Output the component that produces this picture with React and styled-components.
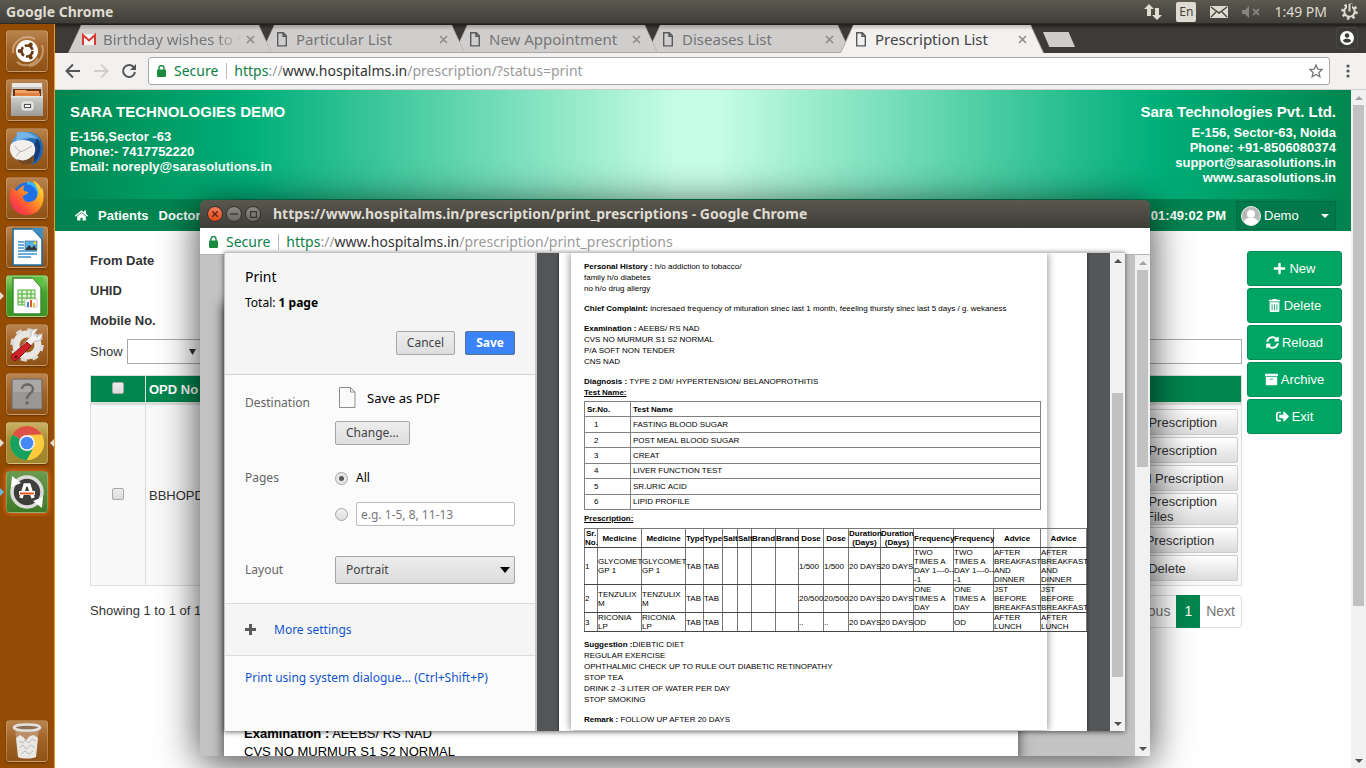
import React from "react";
import styled, { createGlobalStyle, css } from "styled-components";
import { FaHome, FaPlus, FaTrashAlt, FaSyncAlt, FaArchive, FaSignOutAlt } from "react-icons/fa";

const ui = `"Noto Sans", "Open Sans", sans-serif`;
const web = `"Liberation Sans", Arial, sans-serif`;

const GlobalStyle = createGlobalStyle`
  *, *::before, *::after { box-sizing: border-box; }
  body { margin: 0; overflow: hidden; }
  button, input, select { font: inherit; color: inherit; margin: 0; }
  a { color: inherit; text-decoration: none; }
  svg { display: block; flex: none; }
`;

/* ---------- Desktop shell ---------- */

const Desktop = styled.div`
  position: relative;
  display: flex;
  flex-direction: column;
  height: 100vh;
  overflow: hidden;
  font-family: ${ui};
  background: #fff;
`;

const TopPanel = styled.header`
  flex: none;
  display: flex;
  align-items: center;
  justify-content: space-between;
  height: 24px;
  padding: 0 8px 0 6px;
  color: #dfdbd2;
  font-size: 14px;
  line-height: 20px;
  background: linear-gradient(#5c594f, #3f3e39);
  border-bottom: 1px solid #2b2a27;
`;

const PanelTitle = styled.strong`
  font-weight: 700;
`;

const Tray = styled.div`
  display: flex;
  align-items: center;
  gap: 14px;
`;

const Lang = styled.span`
  display: grid;
  place-items: center;
  width: 20px;
  height: 20px;
  border-radius: 2px;
  background: #dfdbd2;
  color: #45443e;
  font-size: 12px;
`;

const Workspace = styled.div`
  flex: 1;
  display: flex;
  min-height: 0;
`;

const Launcher = styled.aside`
  flex: none;
  display: flex;
  flex-direction: column;
  gap: 7px;
  width: 55px;
  padding: 6px 6px;
  background: #944c05;
  border-right: 1px solid #f29a2e;
`;

const LauncherTile = styled.button`
  position: relative;
  flex: none;
  width: 42px;
  height: 42px;
  padding: 0;
  border: 1px solid rgba(255, 220, 180, 0.28);
  border-radius: 4px;
  background: ${(p) => p.$tint || "linear-gradient(#b98450, #a26428 45%, #8f5216)"};
  box-shadow: ${(p) => (p.$glow ? "0 0 4px 1px #e8651c" : "0 1px 2px rgba(0, 0, 0, 0.35)")};
  ${(p) => p.$last && css`margin-top: auto;`}
  svg { width: 40px; height: 40px; }
`;

const Pip = styled.i`
  position: absolute;
  left: -7px;
  top: 16px;
  border: 4px solid transparent;
  border-left-color: ${(p) => p.$color || "#e5ddd2"};
`;

const PipRight = styled(Pip)`
  left: auto;
  right: -7px;
  border-left-color: transparent;
  border-right-color: #e5ddd2;
`;

/* ---------- Browser window ---------- */

const Browser = styled.main`
  flex: 1;
  display: flex;
  flex-direction: column;
  min-width: 0;
`;

const TabStrip = styled.nav`
  flex: none;
  display: flex;
  align-items: flex-end;
  height: 29px;
  padding: 0 8px 0 13px;
  background: linear-gradient(#1f1e1c, #3c3b37 5px);
`;

const Tab = styled.a`
  position: relative;
  isolation: isolate;
  z-index: ${(p) => p.$z};
  flex: 0 1 204px;
  display: flex;
  align-items: center;
  min-width: 0;
  height: 28px;
  margin-right: -11px;
  padding: 0 17px 0 14px;
  color: ${(p) => (p.$active ? "#444" : "#757575")};
  font-size: 15px;
  line-height: 20px;
  &::before, &::after {
    content: "";
    position: absolute;
    inset: 0;
    z-index: -2;
    background: #aaa9a7;
    clip-path: polygon(13px 0, calc(100% - 13px) 0, 100% 100%, 0 100%);
  }
  &::after {
    z-index: -1;
    inset: 0 1px ${(p) => (p.$active ? "0" : "1px")} 1px;
    background: ${(p) => (p.$active ? "linear-gradient(#bcbbba, #f2f1f0 5px)" : "linear-gradient(#9f9e9c, #d0cecd 5px)")};
  }
`;

const TabTitle = styled.span`
  flex: 1;
  margin: 0 5px 0 7px;
  overflow: hidden;
  white-space: nowrap;
  ${(p) => p.$fade && css`mask-image: linear-gradient(90deg, #000 82%, transparent);`}
`;

const NewTab = styled.button`
  width: 32px;
  height: 15px;
  margin: 0 0 6px 10px;
  padding: 0;
  border: 0;
  background: #cfcdcb;
  clip-path: polygon(0 0, 80% 0, 100% 100%, 20% 100%);
`;

const ProfileButton = styled.button`
  margin: 0 0 4px auto;
  width: 22px;
  height: 22px;
  padding: 3px;
  border: 1px solid #494844;
  border-radius: 3px;
  background: none;
`;

const Toolbar = styled.div`
  flex: none;
  display: flex;
  align-items: center;
  gap: 10px;
  height: 37px;
  padding: 0 16px 0 9px;
  background: #f2f1f0;
  border-bottom: 1px solid #cfcecc;
`;

const IconButton = styled.button`
  padding: 0;
  border: 0;
  background: none;
`;

const Omnibox = styled.div`
  flex: 1;
  display: flex;
  align-items: center;
  height: 28px;
  padding: 0 6px 0 8px;
  border: 1px solid #a9a8a7;
  border-radius: 3px;
  background: #fff;
`;

const Address = styled.div`
  flex: 1;
  display: flex;
  align-items: center;
  color: #9a9a9a;
  font-size: 14px;
  line-height: 20px;
  white-space: nowrap;
  em { font-style: normal; color: #0b8043; }
  b { font-weight: 400; color: #333; }
`;

const Secure = styled.span`
  margin-left: 8px;
  padding-right: 8px;
  margin-right: 7px;
  line-height: 16px;
  color: #0b8043;
  border-right: 1px solid #bbb;
`;

const View = styled.div`
  flex: 1;
  display: flex;
  min-height: 0;
`;

const Page = styled.div`
  flex: 1;
  min-width: 0;
  overflow: hidden;
  background: #fff;
  color: #333;
  font: 13px/15px ${web};
`;

/* ---------- Scroll bar ---------- */

const Track = styled.div`
  flex: none;
  display: flex;
  flex-direction: column;
  width: 15px;
  padding: 0 2px;
  background: #f1f1f1;
`;

const Arrow = styled.i`
  flex: none;
  height: 15px;
  display: grid;
  place-items: center;
  &::before {
    content: "";
    border: 4px solid transparent;
    border-top-width: ${(p) => (p.$up ? "0" : "4px")};
    border-bottom-width: ${(p) => (p.$up ? "4px" : "0")};
    border-${(p) => (p.$up ? "bottom" : "top")}-color: ${(p) => (p.$dim ? "#a3a3a3" : "#505050")};
  }
`;

const Part = styled.div`
  flex: ${(p) => p.$grow} 1 0;
  background: ${(p) => (p.$thumb ? "#c1c1c1" : "none")};
`;

const Scroll = ({ before = 0, size, after }) => (
  <Track aria-hidden="true">
    <Arrow $up $dim={before === 0} />
    {before > 0 && <Part $grow={before} />}
    <Part $grow={size} $thumb />
    <Part $grow={after} />
    <Arrow />
  </Track>
);

/* ---------- Hospital site ---------- */

const Banner = styled.header`
  display: flex;
  justify-content: space-between;
  height: 109px;
  padding: 14px 15px 0;
  color: #fff;
  font-weight: 700;
  background: linear-gradient(90deg, #00864f, #00af79 15%, #c6fde6 48%, #c6fde6 51%, #00af79 85%, #00864f);
`;

const Company = styled.address`
  font-style: normal;
  text-align: ${(p) => (p.$right ? "right" : "left")};
  h1, h2 {
    margin: 0 0 ${(p) => (p.$right ? "5px" : "9px")};
    font-size: 15px;
    line-height: 16px;
  }
  span { display: block; }
`;

const SiteNav = styled.nav`
  display: flex;
  align-items: center;
  gap: 10px;
  height: 32px;
  padding: 1px 15px 0 20px;
  color: #fff;
  font-weight: 700;
  background: #00844f;
  time { margin-left: auto; }
`;

const UserMenu = styled.button`
  display: flex;
  align-items: center;
  gap: 3px;
  width: 100px;
  height: 29px;
  padding: 0 6px 0 4px;
  border: 1px solid #006b41;
  background: #007849;
  font-weight: 400;
  text-align: left;
  svg:last-child { margin-left: auto; }
`;

const Content = styled.div`
  display: flex;
  gap: 5px;
  padding: 15px 9px 0 35px;
`;

const Listing = styled.section`
  flex: 1;
  min-width: 0;
`;

const FilterLabel = styled.div`
  line-height: 30px;
  font-weight: 700;
`;

const Controls = styled.div`
  display: flex;
  justify-content: space-between;
  align-items: center;
  margin: 3px 0 11px;
`;

const LengthLabel = styled.label`
  display: flex;
  align-items: center;
  gap: 4px;
`;

const SelectWrap = styled.span`
  position: relative;
  display: block;
  svg { position: absolute; right: ${(p) => p.$right}px; top: ${(p) => p.$top}px; pointer-events: none; }
`;

const LengthSelect = styled.select`
  appearance: none;
  display: block;
  width: 76px;
  height: 25px;
  border: 1px solid #a9a9a9;
  border-radius: 0;
  background: #fff;
`;

const SearchInput = styled.input`
  width: 160px;
  height: 25px;
  border: 1px solid #a9a9a9;
  background: #fff;
`;

const DataTable = styled.table`
  width: 100%;
  border-collapse: collapse;
  table-layout: fixed;
  th, td { border: 1px solid #ddd; padding: 4px 3px; text-align: left; }
  th { height: 28px; color: #fff; background: #00864f; border-bottom: 3px solid #ddd; }
  td { background: #f9f9f9; }
  th:first-child, td:first-child { text-align: center; }
`;

const Check = styled.input`
  appearance: none;
  width: 12px;
  height: 12px;
  border: 1px solid #a8a8a8;
  border-radius: 2px;
  background: linear-gradient(#ededed, #dcdcdc);
`;

const Actions = styled.div`
  display: flex;
  flex-direction: column;
  gap: 2px;
`;

const ActionButton = styled.button`
  min-height: 26px;
  padding: 0;
  border: 1px solid #ccc;
  border-radius: 2px;
  background: linear-gradient(#fff, #dcdcdc);
  line-height: 15px;
`;

const Footer = styled.div`
  display: flex;
  justify-content: space-between;
  align-items: flex-start;
  margin-top: 9px;
  line-height: 31px;
`;

const Pager = styled.nav`
  display: flex;
  height: 33px;
  border: 1px solid #ddd;
  border-radius: 4px;
  color: #777;
  font-size: 14px;
`;

const PageLink = styled.a`
  padding: 0 6px;
  ${(p) => p.$current && css`color: #fff; background: #00864f; margin: -1px 0;  padding: 1px 8px;`}
`;

const SideButtons = styled.aside`
  flex: none;
  display: flex;
  flex-direction: column;
  gap: 2px;
  width: 95px;
  padding-top: 5px;
`;

const GreenButton = styled.button`
  display: flex;
  align-items: center;
  justify-content: center;
  gap: 3px;
  height: 35px;
  padding: 0;
  border: 1px solid #008d54;
  border-radius: 3px;
  background: #00a564;
  color: #fff;
`;

/* ---------- Popup window ---------- */

const Popup = styled.section`
  position: absolute;
  top: 200px;
  left: 200px;
  right: 216px;
  bottom: 12px;
  display: flex;
  flex-direction: column;
  border-radius: 6px 6px 0 0;
  box-shadow: 0 6px 40px rgba(0, 0, 0, 0.75);
`;

const PopupTitle = styled.header`
  flex: none;
  display: flex;
  align-items: center;
  gap: 3px;
  height: 28px;
  padding: 0 7px;
  border-radius: 6px 6px 0 0;
  background: linear-gradient(#5a574e, #3e3d38);
  color: #dfdbd2;
  font-size: 14px;
  line-height: 20px;
  h2 { margin: 0 0 0 9px; font: inherit; font-weight: 700; }
`;

const WindowButton = styled.button`
  display: grid;
  place-items: center;
  width: 16px;
  height: 16px;
  padding: 0;
  border: 1px solid #34332f;
  border-radius: 50%;
  background: ${(p) => (p.$close ? "linear-gradient(#f47b57, #df4a16)" : "linear-gradient(#8a8880, #6b6962)")};
`;

const PopupBar = styled.div`
  flex: none;
  display: flex;
  height: 27px;
  padding: 2px 9px 0;
  background: #fff;
  border-bottom: 1px solid #b5b5b5;
`;

const PopupView = styled.div`
  flex: 1;
  display: flex;
  min-height: 0;
  background: #c3c3c3;
`;

const PopupPage = styled.div`
  flex: 1;
  display: flex;
  padding: 48px 117px 0 24px;
  overflow: hidden;
`;

const PopupDocument = styled.article`
  flex: 1;
  display: flex;
  flex-direction: column;
  justify-content: flex-end;
  height: 458px;
  padding: 0 20px;
  background: #fff;
  box-shadow: 0 0 12px rgba(0, 0, 0, 0.7);
  color: #000;
  font: 13px/18px ${web};
`;

/* ---------- Print dialog ---------- */

const Dialog = styled.div`
  position: absolute;
  top: 52px;
  left: 24px;
  right: 25px;
  bottom: 25px;
  display: flex;
  border: 1px solid #c4c4c4;
  border-width: 1px 0 0 1px;
  box-shadow: 0 1px 5px rgba(0, 0, 0, 0.6);
  overflow: hidden;
  background: #fbfbfb;
`;

const Settings = styled.form`
  flex: none;
  width: 312px;
  border-right: 2px solid #c8c8c8;
  color: #646464;
  font-size: 12px;
  line-height: 16px;
`;

const SettingsHead = styled.div`
  height: 122px;
  padding: 15px 20px 0;
  background: #f5f5f5;
  border-bottom: 1px solid #d2d2d2;
  color: #000;
  h3 { margin: 0 0 9px; font-size: 14px; font-weight: 400; line-height: 18px; }
`;

const ButtonRow = styled.div`
  display: flex;
  justify-content: flex-end;
  gap: 10px;
  margin-top: 20px;
`;

const DialogButton = styled.button`
  height: 24px;
  padding: 0 10px;
  border: 1px solid #a6a6a6;
  border-radius: 2px;
  background: linear-gradient(#ededed, #dedede);
  color: #444;
  line-height: 16px;
  ${(p) => p.$primary && css`
    border-color: #5b6f94;
    background: #3b84f8;
    color: #fff;
    font-weight: 700;
  `}
`;

const SettingsBody = styled.div`
  display: flex;
  flex-direction: column;
  gap: 25px;
  height: 229px;
  padding: 12px 20px 0;
  border-bottom: 1px solid #dcdcdc;
`;

const Setting = styled.div`
  display: grid;
  grid-template-columns: 90px minmax(0, 1fr);
  padding-top: ${(p) => p.$space || 0}px;
  > :first-child { padding-top: ${(p) => p.$drop || 0}px; }
`;

const Options = styled.div`
  display: flex;
  flex-direction: column;
  align-items: ${(p) => (p.$fill ? "stretch" : "flex-start")};
  gap: ${(p) => p.$gap || 0}px;
`;

const Target = styled.span`
  display: flex;
  align-items: center;
  gap: 11px;
  height: 22px;
  padding-left: 4px;
  color: #000;
  font-size: 13px;
`;

const RadioRow = styled.div`
  display: flex;
  align-items: center;
  gap: 8px;
  color: #000;
  label { flex: 1; }
`;

const Radio = styled.input`
  appearance: none;
  flex: none;
  width: 13px;
  height: 13px;
  border: 1px solid #a4a4a4;
  border-radius: 50%;
  background: linear-gradient(#f0f0f0, #dedede);
  &:checked { background: radial-gradient(circle, #555 2px, #e6e6e6 3px); }
`;

const RangeInput = styled.input`
  flex: 1;
  width: 100%;
  min-width: 0;
  height: 24px;
  padding: 0 4px;
  border: 1px solid #bdbdbd;
  border-radius: 2px;
  background: #fff;
  &::placeholder { color: #777; }
`;

const LayoutSelect = styled.select`
  appearance: none;
  display: block;
  width: 100%;
  height: 28px;
  padding: 0 10px;
  border: 1px solid #a6a6a6;
  border-radius: 2px;
  background: linear-gradient(#ededed, #dcdcdc);
  color: #444;
`;

const MoreSettings = styled.div`
  display: flex;
  align-items: center;
  gap: 18px;
  height: 52px;
  padding: 0 20px;
  border-bottom: 1px solid #dcdcdc;
  background: #f5f5f5;
`;

const BlueLink = styled.a`
  color: #1155cc;
`;

const SystemPrint = styled.div`
  padding: 14px 20px;
`;

const Preview = styled.div`
  flex: 1;
  display: flex;
  min-width: 0;
  background: #525659;
`;

const Sheet = styled.div`
  flex: 1;
  min-width: 0;
  margin: 0 23px 0 22px;
  background: #fff;
  box-shadow: 0 0 3px rgba(0, 0, 0, 0.6);
  overflow: hidden;
`;

const Prescription = styled.article`
  height: calc(100% - 1px);
  margin: 0 40px 0 12px;
  padding: 8px 6px 0 13px;
  box-shadow: 0 0 8px rgba(0, 0, 0, 0.5);
  color: #000;
  font: 8px/11px ${web};
  h4 { margin: 0; font-size: 8px; line-height: 11px; text-decoration: underline; }
  p { margin: 0 0 9px; }
`;

const Line = styled.span`
  display: block;
`;

const TestTable = styled.table`
  width: 100%;
  height: 109px;
  margin: 3px 0;
  border-collapse: collapse;
  th, td { height: 15px; border: 1px solid #808080; padding: 0 2px; text-align: left; line-height: 11px; }
  th:first-child { width: 46px; }
  td:first-child { padding-left: 9px; }
`;

const MedicineTable = styled.table`
  width: 503px;
  margin: 4px 0 7px;
  table-layout: fixed;
  border-collapse: collapse;
  border: 1px solid #222;
  line-height: 9px;
  th, td { border: 1px solid #777; border-bottom-color: #444; padding: 0; overflow: visible; }
  th { text-align: center; }
  td { text-align: left; white-space: pre; }
`;

/* ---------- Drawings ---------- */

const Lock = () => (
  <svg width="9" height="12" viewBox="0 0 9 12"><rect y="4.5" width="9" height="7.5" rx="1" fill="#1a8a3f" /><path d="M2 5V3a2.5 2.5 0 0 1 5 0v2" fill="none" stroke="#1a8a3f" strokeWidth="1.4" /></svg>
);
const FileIcon = () => (
  <svg width="14" height="15" viewBox="0 0 14 15"><path d="M2.7.7h5.6l3 3.2v10H2.7z M8 .7v3.6h3.4" fill="none" stroke="#5a5a5a" strokeWidth="1.4" /></svg>
);
const GmailIcon = () => (
  <svg width="14" height="15" viewBox="0 0 14 15"><path d="M0 2h14v11H0z" fill="#f4f4f4" /><path d="M1 13V3l6 5.5L13 3v10" fill="none" stroke="#d93a30" strokeWidth="2" /></svg>
);
const CloseX = () => (
  <svg width="9" height="9" viewBox="0 0 9 9"><path d="M1 1l7 7M8 1l-7 7" stroke="#8c8b8a" strokeWidth="1.5" /></svg>
);
const Caret = ({ color = "#000", w = 9, h = 5 }) => (
  <svg width={w} height={h} viewBox="0 0 10 6" preserveAspectRatio="none"><path d="M0 0h10L5 6z" fill={color} /></svg>
);

const UbuntuArt = () => (
  <svg viewBox="0 0 40 40">
    <g fill="none" stroke="#e6c9ac" strokeWidth="2" opacity=".55"><path d="M6 22C5 9 18 3 28 8" /><path d="M35 14c3 9-2 20-13 21" /><path d="M10 31c7 6 18 3 21-4" /></g>
    <circle cx="20" cy="20" r="11" fill="#fff" />
    <circle cx="20" cy="20" r="5.5" fill="none" stroke="#6b3a12" strokeWidth="2.6" strokeDasharray="9.5 2" />
    <g fill="#6b3a12"><circle cx="12.6" cy="20" r="2" /><circle cx="23.7" cy="13.6" r="2" /><circle cx="23.7" cy="26.4" r="2" /></g>
  </svg>
);
const FilesArt = () => (
  <svg viewBox="0 0 40 40">
    <defs><linearGradient id="cab" x1="0" y1="0" x2="0" y2="1"><stop offset="0" stopColor="#cfcfce" /><stop offset="1" stopColor="#9b9b9a" /></linearGradient></defs>
    <path d="M5 3h30l1 13H4z" fill="#c4c4c3" /><path d="M5 3h30v4H5z" fill="#e9e9e8" />
    <path d="M6 9h28v7H6z" fill="#6b3411" /><path d="M8 10h11l1 1h12v2H8z" fill="#f0a267" /><path d="M8 13h25v3H8z" fill="#e2813f" />
    <path d="M4 16h32v20H4z" fill="url(#cab)" /><path d="M4 16h32v1.500H4z" fill="#e4e4e3" />
    <rect x="15" y="22" width="11" height="8" rx="2" fill="#d9d9d8" stroke="#f4f4f3" /><rect x="17.500" y="24.500" width="6" height="3" fill="#f6f6f5" stroke="#555" />
  </svg>
);
const MailArt = () => (
  <svg viewBox="0 0 40 40">
    <path d="M14 4c13-4 23 4 22 17-1 9-6 14-12 15 4-5 5-9 3-14L8 17C7 10 9 6 14 4z" fill="#2468ac" />
    <path d="M4 17C5 8 12 3 20 3c6 0 11 3 13 8-8-3-13-2-18 2z" fill="#4f97d4" /><path d="M10 3c8-1 15 1 19 7-7-3-14-1-20 4z" fill="#74b4e6" /><path d="M30 9c5 6 5 16-3 25l-1-15z" fill="#153f7c" />
    <path d="M4 15c5-5 17-5 22-1 3 4 3 9 0 13-5 6-14 7-20 1C3 24 2 19 4 15z" fill="#f1f0ed" /><path d="M8 17c2 4 5 6 8 5l9-5M9 27l5-5" fill="none" stroke="#b5b2ab" />
    <path d="M10 30c6 3 12 1 16-4l-1 8c-6 3-12 1-15-4z" fill="#6f4a26" />
  </svg>
);
const FirefoxArt = () => (
  <svg viewBox="0 0 40 40">
    <defs><linearGradient id="fox" x1="1" y1="0" x2="0" y2="1"><stop offset="0" stopColor="#fff04a" /><stop offset=".35" stopColor="#ffa51f" /><stop offset=".7" stopColor="#ff4a3a" /><stop offset="1" stopColor="#e5207a" /></linearGradient></defs>
    <circle cx="20" cy="18" r="13.5" fill="#1f6fe8" /><path d="M20 5c7 0 12 6 12 13" fill="none" stroke="#35b6ff" strokeWidth="3" />
    <path d="M5 9c1 2 3 3 5 4 2-3 5-5 8-6-2 2-2 4-1 6l4 1c0 3-5 2-5 5s3 5 6 5c5 0 9-4 9-10 0-4-3-7-5-11 6 2 8 6 8 9l1-3c4 11 1 27-15 28C7 37-1 24 5 9z" fill="url(#fox)" />
  </svg>
);
const WriterArt = () => (
  <svg viewBox="0 0 40 40">
    <path d="M6 2h20l9 10v26H6z" fill="#fff" stroke="#1d6b9c" strokeWidth="1.6" /><path d="M25 1h11v12z" fill="#3f8fc2" />
    <path d="M11 15h6M11 18h6M11 21h6M11 24h19M11 27h19M11 30h13" stroke="#3d94cc" strokeWidth="1.4" /><path d="M18 14h12v9H18z" fill="#5ab0e2" stroke="#2b5f80" strokeWidth=".6" /><path d="M18 23l4-5 3 3 2-3 3 5z" fill="#333" /><circle cx="28" cy="16" r="1.400" fill="#f4d03a" />
  </svg>
);
const CalcArt = () => (
  <svg viewBox="0 0 40 40">
    <path d="M6 2h20l8 9v27H6z" fill="#fff" stroke="#37892a" strokeWidth="1.4" /><path d="M25 1h11v12z" fill="#5cc043" />
    <path d="M11 14h17v15H11z" fill="#dff3d6" stroke="#4fae38" /><path d="M11 18h17M11 22h17M11 26h17M15 14v15M20 14v15M24 14v15" stroke="#4fae38" />
    <path d="M18 23h12v8H18z" fill="#fff" stroke="#aaa" strokeWidth=".6" /><path d="M20 26h2v5h-2z" fill="#3b8fd0" /><path d="M23 24h2v7h-2z" fill="#e85c2c" /><path d="M26 27h2v4h-2z" fill="#f2b82c" />
  </svg>
);
const ToolsArt = () => (
  <svg viewBox="0 0 40 40">
    <circle cx="20" cy="20" r="11" fill="none" stroke="#e8e6e3" strokeWidth="7" /><circle cx="20" cy="20" r="15" fill="none" stroke="#dddbd8" strokeWidth="3.5" strokeDasharray="6 5.780" />
    <path d="M35 8l-5 4-3-3 4-5c-5-1-8 3-7 7L10 26l4 4 14-14c5 1 8-3 7-8z" fill="#f4f3f1" stroke="#999" strokeWidth=".6" />
    <path d="M20 17l4 4L11 34c-2 2-4 2-5 1-2-2-2-4 0-6z" fill="#d0222a" stroke="#8c1016" /><circle cx="9" cy="32" r="1.4" fill="#5e0a0e" />
  </svg>
);
const HelpArt = () => (
  <svg viewBox="0 0 40 40">
    <rect x="5" y="5" width="30" height="30" rx="1" fill="#999896" stroke="#6e6d6b" /><path d="M6 6h28v12H6z" fill="#aaa9a7" />
    <path d="M15 15c0-6 11-6 11 0 0 5-6 4-6 10" fill="none" stroke="#686765" strokeWidth="2.4" /><circle cx="20" cy="29" r="1.8" fill="#686765" />
  </svg>
);
const ChromeArt = () => (
  <svg viewBox="0 0 40 40">
    <circle cx="20" cy="20" r="17" fill="#fccb3d" />
    <path d="M20 20L5.300 11.500A17 17 0 0 1 34.700 11.500L20 12z" fill="#de5246" /><path d="M5.300 11.500A17 17 0 0 0 20 37l7-13-7-4z" fill="#17a05e" /><path d="M20 12h14.900A17 17 0 0 1 20 37l7-13z" fill="#fccb3d" />
    <circle cx="20" cy="20" r="8" fill="#f1f1f1" /><circle cx="20" cy="20" r="6.300" fill="#4587f3" />
  </svg>
);
const UpdaterArt = () => (
  <svg viewBox="0 0 40 40">
    <circle cx="20" cy="20" r="15" fill="#3e3e3c" stroke="#dcdcda" strokeWidth="3.500" /><path d="M4 15l1-11 9 7z" fill="#fff" /><path d="M36 25l-1 11-9-7z" fill="#fff" />
    <path d="M14 26l4-13h4l4 13" fill="none" stroke="#fff" strokeWidth="3.500" /><path d="M12 19h16v4H12z" fill="#fff" /><path d="M13 20.500h14v2H13z" fill="#e8541c" />
  </svg>
);
const TrashArt = () => (
  <svg viewBox="0 0 40 40">
    <path d="M8 8l4 28h16l4-28z" fill="#c7a98a" opacity=".6" /><ellipse cx="20" cy="6.500" rx="13" ry="3" fill="#8d7156" stroke="#e4e2df" strokeWidth="2.500" />
    <path d="M9 17l4-3 3 2 3 3 4-4 4-1 4 3-2 19c-5 2-14 2-18 0z" fill="#e9e8e5" /><path d="M12 20l4 2 2-3 4 3 3-4 4 2M12 27l4-3 3 4 5-4 4 3M14 33l4-3 4 3 4-3" fill="none" stroke="#b3b0aa" strokeWidth=".8" />
  </svg>
);

/* ---------- Data ---------- */

const launcher = [
  { name: "Search your computer", art: UbuntuArt },
  { name: "Files", art: FilesArt },
  { name: "Thunderbird Mail", art: MailArt },
  { name: "Firefox", art: FirefoxArt },
  { name: "Writer", art: WriterArt },
  { name: "Calc", art: CalcArt, tint: "linear-gradient(#8fce6c, #45a52c 40%, #3c9426)", pip: "#e5ddd2" },
  { name: "System Settings", art: ToolsArt },
  { name: "Help", art: HelpArt },
  { name: "Google Chrome", art: ChromeArt, tint: "linear-gradient(#c9b267, #a78a2d 45%, #9f852e)", pip: "#e5ddd2", active: true },
  { name: "Software Updater", art: UpdaterArt, tint: "linear-gradient(#6b9a50, #3d7a26)", pip: "#63b7d8", glow: true },
  { name: "Trash", art: TrashArt, last: true },
];

const tabs = ["Birthday wishes to S", "Particular List", "New Appointment", "Diseases List", "Prescription List"];

const actions = ["View Prescription", "View Prescription", "Upload Prescription", "View Prescription Files\u00a0\u00a0\u00a0\u00a0", "Edit Prescription", "Delete"];

const sideButtons = [
  ["New", FaPlus],
  ["Delete", FaTrashAlt],
  ["Reload", FaSyncAlt],
  ["Archive", FaArchive],
  ["Exit", FaSignOutAlt],
];

const tests = ["FASTING BLOOD SUGAR", "POST MEAL BLOOD SUGAR", "CREAT", "LIVER FUNCTION TEST", "SR.URIC ACID", "LIPID PROFILE"];

const columns = [13, 44, 44, 18, 19, 15, 14, 24, 23, 25, 25, 32, 33, 40, 40, 47, 46];
const headings = ["Medicine", "Type", "Salt", "Brand", "Dose", "Duration (Days)", "Frequency", "Advice"];
const medicines = [
  ["GLYCOMET\nGP 1", "TAB", "", "", "1/500", "20 DAYS", "TWO\nTIMES A\nDAY 1---0--\n-1", "AFTER\nBREAKFAST\nAND\nDINNER"],
  ["TENZULIX\nM", "TAB", "", "", "20/500", "20 DAYS", "ONE\nTIMES A\nDAY", "JST\nBEFORE\nBREAKFAST"],
  ["RICONIA\nLP", "TAB", "", "", "..", "20 DAYS", "OD", "AFTER\nLUNCH"],
];

const suggestions = ["REGULAR EXERCISE", "OPHTHALMIC CHECK UP TO RULE OUT DIABETIC RETINOPATHY", "STOP TEA", "DRINK 2 -3 LITER OF WATER PER DAY", "STOP SMOKING"];

const twice = (list) => list.flatMap((v, i) => [[v, `${i}a`], [v, `${i}b`]]);

/* ---------- Sections ---------- */

const AddressLine = ({ path }) => (
  <Address role="textbox" aria-label="Address" aria-readonly="true">
    <Lock />
    <Secure>Secure</Secure>
    <span><em>https</em>://<b>www.hospitalms.in</b>{path}</span>
  </Address>
);

const SystemPanel = () => (
  <TopPanel>
    <PanelTitle>Google Chrome</PanelTitle>
    <Tray>
      <svg width="18" height="16" viewBox="0 0 18 16" fill="#dfdbd2"><path d="M5 0l5 5H7v7H3V5H0z" /><path d="M13 16l5-5h-3V4h-4v7H8z" /></svg>
      <Lang>En</Lang>
      <svg width="18" height="12" viewBox="0 0 18 12"><rect width="18" height="12" rx="1" fill="#dfdbd2" /><path d="M1 1l8 6 8-6M1 11l5-5M17 11l-5-5" fill="none" stroke="#45443e" strokeWidth="1.400" /></svg>
      <svg width="18" height="12" viewBox="0 0 18 12"><path d="M0 4h3l4-4v12L3 8H0z" fill="#85837b" /><path d="M11 3l6 6M17 3l-6 6" stroke="#85837b" strokeWidth="1.800" /></svg>
      <span>1:49 PM</span>
      <svg width="17" height="17" viewBox="0 0 17 17"><circle cx="8.500" cy="8.500" r="5.200" fill="none" stroke="#dfdbd2" strokeWidth="2" /><circle cx="8.500" cy="8.500" r="7" fill="none" stroke="#dfdbd2" strokeWidth="2.600" strokeDasharray="2.500 3" /><path d="M8.500 1v7" stroke="#4c4a43" strokeWidth="5" /><path d="M8.500 1v7.500" stroke="#dfdbd2" strokeWidth="2" /></svg>
    </Tray>
  </TopPanel>
);

const BrowserChrome = () => (
  <>
    <TabStrip aria-label="Tabs">
      {tabs.map((title, i) => (
        <Tab key={title} href="#tab" $active={i === 4} $z={i === 4 ? 9 : 5 - i}>
          {i === 0 ? <GmailIcon /> : <FileIcon />}
          <TabTitle $fade={i === 0}>{title}</TabTitle>
          <CloseX />
        </Tab>
      ))}
      <NewTab aria-label="New tab" />
      <ProfileButton aria-label="Profile">
        <svg width="14" height="14" viewBox="0 0 14 14"><circle cx="7" cy="7" r="7" fill="#fff" /><circle cx="7" cy="4.500" r="2.200" fill="#3c3b37" /><path d="M3 9.500c1-2.500 7-2.500 8 0-1 3-7 3-8 0z" fill="#3c3b37" /></svg>
      </ProfileButton>
    </TabStrip>
    <Toolbar>
      <IconButton aria-label="Back"><svg width="18" height="18" viewBox="0 0 18 18"><path d="M16 9H3M9 2.500L2.500 9 9 15.500" fill="none" stroke="#555" strokeWidth="2" /></svg></IconButton>
      <IconButton aria-label="Forward"><svg width="18" height="18" viewBox="0 0 18 18"><path d="M2 9h13M9 2.500L15.500 9 9 15.500" fill="none" stroke="#d0cfce" strokeWidth="2" /></svg></IconButton>
      <IconButton aria-label="Reload page"><svg width="18" height="18" viewBox="0 0 18 18"><path d="M14 5.500A6 6 0 1 0 15 10" fill="none" stroke="#555" strokeWidth="2" /><path d="M16 2v6h-6z" fill="#555" /></svg></IconButton>
      <Omnibox>
        <AddressLine path="/prescription/?status=print" />
        <IconButton aria-label="Bookmark"><svg width="14" height="14" viewBox="0 0 14 14"><path d="M7 1l1.800 4.100 4.400.400-3.300 2.900 1 4.400L7 10.500l-3.900 2.300 1-4.400L.8 5.500l4.400-.4z" fill="none" stroke="#777" strokeWidth="1.300" /></svg></IconButton>
      </Omnibox>
      <IconButton aria-label="Menu"><svg width="10" height="14" viewBox="0 0 10 14" fill="#555"><circle cx="8" cy="2" r="1.600" /><circle cx="8" cy="7" r="1.600" /><circle cx="8" cy="12" r="1.600" /></svg></IconButton>
    </Toolbar>
  </>
);

const HospitalPage = () => (
  <Page>
    <Banner>
      <Company><h1>SARA TECHNOLOGIES DEMO</h1><span>E-156,Sector -63</span><span>Phone:- 7417752220</span><span>Email: noreply@sarasolutions.in</span></Company>
      <Company $right><h2>Sara Technologies Pvt. Ltd.</h2><span>E-156, Sector-63, Noida</span><span>Phone: +91-8506080374</span><span>support@sarasolutions.in</span><span>www.sarasolutions.in</span></Company>
    </Banner>
    <SiteNav>
      <a href="#home" aria-label="Home"><FaHome size={13} /></a>
      <a href="#patients">Patients</a>
      <a href="#doctor">Doctor</a>
      <time>01:49:02 PM</time>
      <UserMenu>
        <svg width="20" height="20" viewBox="0 0 20 20"><circle cx="10" cy="10" r="9.500" fill="#b9b9b9" stroke="#e8f3ee" /><circle cx="10" cy="8" r="4" fill="#fff" /><path d="M3 16c1-4 4-4 7-4s6 0 7 4c-4 4-10 4-14 0z" fill="#fff" /></svg>
        Demo
        <Caret color="#fff" w={8} h={4} />
      </UserMenu>
    </SiteNav>
    <Content>
      <Listing>
        <FilterLabel>From Date</FilterLabel>
        <FilterLabel>UHID</FilterLabel>
        <FilterLabel>Mobile No.</FilterLabel>
        <Controls>
          <LengthLabel>
            Show
            <SelectWrap $right={7} $top={10}><LengthSelect /><Caret color="#333" w={7} h={6} /></SelectWrap>
          </LengthLabel>
          <SearchInput type="search" aria-label="Search" />
        </Controls>
        <DataTable>
          <colgroup><col style={{ width: 55 }} /><col /><col style={{ width: 149 }} /></colgroup>
          <thead>
            <tr><th><Check type="checkbox" aria-label="Select all" /></th><th>OPD No</th><th /></tr>
          </thead>
          <tbody>
            <tr>
              <td><Check type="checkbox" aria-label="Select row" /></td>
              <td>BBHOPD</td>
              <td><Actions>{actions.map((a, i) => <ActionButton key={i}>{a}</ActionButton>)}</Actions></td>
            </tr>
          </tbody>
        </DataTable>
        <Footer>
          <span>Showing 1 to 1 of 1</span>
          <Pager aria-label="Pages"><PageLink href="#prev">Previous</PageLink><PageLink href="#1" $current>1</PageLink><PageLink href="#next">Next</PageLink></Pager>
        </Footer>
      </Listing>
      <SideButtons>
        {sideButtons.map(([label, Icon]) => <GreenButton key={label}><Icon size={13} />{label}</GreenButton>)}
      </SideButtons>
    </Content>
  </Page>
);

const PrintSettings = () => (
  <Settings>
    <SettingsHead>
      <h3>Print</h3>
      <div>Total: <b>1 page</b></div>
      <ButtonRow><DialogButton type="button">Cancel</DialogButton><DialogButton type="button" $primary>Save</DialogButton></ButtonRow>
    </SettingsHead>
    <SettingsBody>
      <Setting $drop={8}>
        <span>Destination</span>
        <Options $gap={12}>
          <Target>
            <svg width="17" height="22" viewBox="0 0 17 22"><path d="M.5.500h11l4.500 4.500v15.500H.5z" fill="#fafafa" stroke="#8c8c8c" /><path d="M11.500.500V5H16" fill="none" stroke="#8c8c8c" /></svg>
            Save as PDF
          </Target>
          <DialogButton type="button">Change…</DialogButton>
        </Options>
      </Setting>
      <Setting>
        <span>Pages</span>
        <Options $gap={16} $fill>
          <RadioRow><Radio type="radio" name="range" id="all" defaultChecked /><label htmlFor="all">All</label></RadioRow>
          <RadioRow><Radio type="radio" name="range" aria-label="Page range" /><RangeInput placeholder="e.g. 1-5, 8, 11-13" aria-label="Pages to print" /></RadioRow>
        </Options>
      </Setting>
      <Setting $space={5} $drop={6}>
        <label htmlFor="layout">Layout</label>
        <SelectWrap $right={5} $top={11}><LayoutSelect id="layout"><option>Portrait</option></LayoutSelect><Caret w={10} h={6} /></SelectWrap>
      </Setting>
    </SettingsBody>
    <MoreSettings>
      <svg width="11" height="11" viewBox="0 0 11 11"><path d="M5.500 0v11M0 5.500h11" stroke="#5a5a5a" strokeWidth="3" /></svg>
      <BlueLink href="#more">More settings</BlueLink>
    </MoreSettings>
    <SystemPrint><BlueLink href="#system">Print using system dialogue… (Ctrl+Shift+P)</BlueLink></SystemPrint>
  </Settings>
);

const PrescriptionSheet = () => (
  <Prescription>
    <p><b>Personal History :</b> h/o addiction to tobacco/<Line>family h/o diabetes</Line><Line>no h/o drug allergy</Line></p>
    <p><b>Chief Complaint:</b> incresaed frequency of mituration sinec last 1 month, feeeling thursty sinec last 5 days / g. wekaness</p>
    <p><b>Examination :</b> AEEBS/ RS NAD<Line>CVS NO MURMUR S1 S2 NORMAL</Line><Line>P/A SOFT NON TENDER</Line><Line>CNS NAD</Line></p>
    <div><b>Diagnosis :</b> TYPE 2 DM/ HYPERTENSION/ BELANOPROTHITIS</div>
    <h4>Test Name:</h4>
    <TestTable>
      <tbody>
        <tr><th>Sr.No.</th><th>Test Name</th></tr>
        {tests.map((t, i) => <tr key={t}><td>{i + 1}</td><td>{t}</td></tr>)}
      </tbody>
    </TestTable>
    <h4>Prescription:</h4>
    <MedicineTable>
      <colgroup>{columns.map((w, i) => <col key={i} style={{ width: w }} />)}</colgroup>
      <thead><tr><th>Sr. No.</th>{twice(headings).map(([h, k]) => <th key={k}>{h}</th>)}</tr></thead>
      <tbody>
        {medicines.map((cells, i) => (
          <tr key={i}><td>{i + 1}</td>{twice(cells).map(([c, k]) => <td key={k}>{c}</td>)}</tr>
        ))}
      </tbody>
    </MedicineTable>
    <p><b>Suggestion :</b>DIEBTIC DIET{suggestions.map((s) => <Line key={s}>{s}</Line>)}</p>
    <p><b>Remark :</b> FOLLOW UP AFTER 20 DAYS</p>
  </Prescription>
);

const PrintPopup = () => (
  <Popup>
    <PopupTitle>
      <WindowButton $close aria-label="Close"><svg width="6" height="6" viewBox="0 0 6 6"><path d="M0 0l6 6M6 0L0 6" stroke="#5c2410" strokeWidth="1.300" /></svg></WindowButton>
      <WindowButton aria-label="Minimise"><svg width="8" height="6" viewBox="0 0 8 6"><path d="M0 3h8" stroke="#34332f" strokeWidth="1.300" /></svg></WindowButton>
      <WindowButton aria-label="Maximise"><svg width="7" height="7" viewBox="0 0 7 7"><path d="M.6.6h5.800v5.800H.6z" fill="none" stroke="#34332f" strokeWidth="1.200" /></svg></WindowButton>
      <h2>https://www.hospitalms.in/prescription/print_prescriptions - Google Chrome</h2>
    </PopupTitle>
    <PopupBar><AddressLine path="/prescription/print_prescriptions" /></PopupBar>
    <PopupView>
      <PopupPage>
        <PopupDocument><div><b>Examination :</b> AEEBS/ RS NAD</div><div>CVS NO MURMUR S1 S2 NORMAL</div></PopupDocument>
      </PopupPage>
      <Scroll size={197} after={274} />
    </PopupView>
    <Dialog role="dialog" aria-label="Print">
      <PrintSettings />
      <Preview>
        <Sheet><PrescriptionSheet /></Sheet>
        <Scroll before={125} size={284} after={39} />
      </Preview>
    </Dialog>
  </Popup>
);

export default function App() {
  return (
    <Desktop>
      <GlobalStyle />
      <SystemPanel />
      <Workspace>
        <Launcher>
          {launcher.map(({ name, art: Art, tint, pip, glow, active, last }) => (
            <LauncherTile key={name} aria-label={name} $tint={tint} $glow={glow} $last={last}>
              <Art />
              {pip && <Pip $color={pip} />}
              {active && <PipRight />}
            </LauncherTile>
          ))}
        </Launcher>
        <Browser>
          <BrowserChrome />
          <View>
            <HospitalPage />
            <Scroll size={501} after={147} />
          </View>
        </Browser>
      </Workspace>
      <PrintPopup />
    </Desktop>
  );
}
